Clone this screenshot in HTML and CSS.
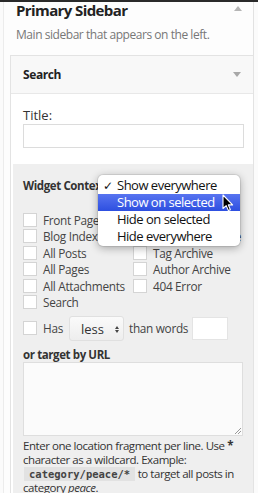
FILE: index.html
```html
<!DOCTYPE html>
<html>
<head>
<meta charset="utf-8">
<link rel="stylesheet" href="styles.css">
</head>
<body>
<div class="topbar"></div>
<div class="page">
  <div class="sidebar-head">
    <h2 class="sidebar-title">Primary Sidebar</h2>
    <span class="arrow-up"></span>
  </div>
  <p class="sidebar-desc">Main sidebar that appears on the left.</p>

  <div class="widget">
    <div class="widget-top">
      <span class="widget-name">Search</span>
      <span class="arrow-down"></span>
    </div>
    <div class="widget-body">
      <label class="field-label">Title:</label>
      <div class="text-input"></div>

      <div class="context">
        <div class="context-label">Widget Context</div>
        <div class="checks">
          <div class="check"><span class="box"></span>Front Page</div>
          <div class="check"><span class="box"></span>All Archives</div>
          <div class="check"><span class="box"></span>Blog Index</div>
          <div class="check"><span class="box"></span>Category Archive</div>
          <div class="check"><span class="box"></span>All Posts</div>
          <div class="check"><span class="box"></span>Tag Archive</div>
          <div class="check"><span class="box"></span>All Pages</div>
          <div class="check"><span class="box"></span>Author Archive</div>
          <div class="check"><span class="box"></span>All Attachments</div>
          <div class="check"><span class="box"></span>404 Error</div>
          <div class="check"><span class="box"></span>Search</div>
        </div>
        <div class="words-row">
          <span class="box"></span>
          <span class="has">Has</span>
          <span class="select">less<span class="updown"><span class="up"></span><span class="down"></span></span></span>
          <span class="than">than words</span>
          <span class="num-input"></span>
        </div>
        <div class="context-label url-label">or target by URL</div>
        <div class="textarea"><span class="grip"></span></div>
        <p class="help">Enter one location fragment per line. Use <strong>*</strong> character as a wildcard. Example: <code>category/peace/*</code> to target all posts in category <em>peace</em>.</p>

        <div class="menu">
          <div class="menu-item"><span class="tick">✓</span>Show everywhere</div>
          <div class="menu-item selected">Show on selected</div>
          <div class="menu-item">Hide on selected</div>
          <div class="menu-item">Hide everywhere</div>
        </div>
        <svg class="cursor" width="12" height="18" viewBox="0 0 12 18"><path d="M1 1 L1 14.5 L4.2 11.6 L6.4 16.6 L8.4 15.7 L6.3 10.9 L10.6 10.9 Z" fill="#000" stroke="#fff" stroke-width="1.1" stroke-linejoin="round"/></svg>
      </div>
    </div>
  </div>
</div>
</body>
</html>
```
FILE: styles.css
```css
* { box-sizing: border-box; }
html, body { margin: 0; padding: 0; }
body {
  width: 258px;
  height: 493px;
  overflow: hidden;
  background: #fbfbfb;
  font-family: "Open Sans", "Liberation Sans", sans-serif;
  color: #333;
}
.topbar { height: 2px; background: #2a2a2a; }
.page {
  margin-left: 3px;
  width: 251px;
  border-left: 1px solid #ececec;
  border-right: 1px solid #e2e2e2;
  background: #fdfdfd;
  min-height: 491px;
  position: relative;
}
.sidebar-head {
  display: flex;
  justify-content: space-between;
  align-items: flex-start;
  padding: 0 11px 0 12px;
  height: 21px;
  overflow: hidden;
}
.sidebar-title {
  margin: -3px 0 0;
  font-size: 15px;
  letter-spacing: -0.6px;
  line-height: 22px;
  font-weight: 700;
  color: #222;
}
.arrow-up {
  margin-top: 4px;
  width: 0; height: 0;
  border-left: 4px solid transparent;
  border-right: 4px solid transparent;
  border-bottom: 5px solid #b5b5b5;
}
.sidebar-desc {
  margin: 4px 0 0 12px;
  font-size: 12px;
  letter-spacing: -0.45px;
  line-height: 16px;
  color: #777;
}
.widget {
  margin: 12px 0 0 6px;
  width: 244px;
  border: 1px solid #e3e3e3;
  background: #fff;
}
.widget-top {
  height: 38px;
  display: flex;
  align-items: center;
  justify-content: space-between;
  padding: 0 12px 0 12px;
  background: #f8f8f8;
  border-bottom: 1px solid #e8e8e8;
}
.widget-name { font-size: 12px; letter-spacing: -0.4px; font-weight: 700; color: #222; }
.arrow-down {
  width: 0; height: 0;
  border-left: 4px solid transparent;
  border-right: 4px solid transparent;
  border-top: 5px solid #a8a8a8;
}
.widget-body { padding: 12px 0 0 0; }
.field-label {
  display: block;
  margin-left: 12px;
  font-size: 13px;
  line-height: 18px;
}
.text-input {
  margin: 0 9px 0 12px;
  height: 24px;
  border: 1px solid #dcdcdc;
  background: #fff;
}
.context {
  position: relative;
  margin: 16px 0 0 2px;
  padding: 14px 9px 4px 10px;
  background: #efefef;
}
.context-label {
  font-size: 11.5px;
  letter-spacing: -0.4px;
  font-weight: 700;
  line-height: 16px;
  color: #333;
}
.checks {
  margin-top: 19px;
  display: grid;
  grid-template-columns: 110px 1fr;
  row-gap: 2.4px;
}
.check {
  display: flex;
  align-items: center;
  height: 14px;
  font-size: 11.8px;
  letter-spacing: -0.3px;
  white-space: nowrap;
  color: #444;
}
.box {
  flex: none;
  display: inline-block;
  width: 14px;
  height: 14px;
  margin-right: 6px;
  border: 1px solid #d4d4d4;
  background: #fff;
}
.words-row {
  display: flex;
  align-items: center;
  margin-top: 7px;
  height: 25px;
  font-size: 11.8px;
  letter-spacing: -0.3px;
  color: #444;
}
.words-row .box { margin-right: 6px; }
.has { margin-right: 6px; }
.select {
  display: flex;
  align-items: center;
  justify-content: space-between;
  width: 55px;
  height: 25px;
  padding: 2px 4px 0 11px;
  border: 1px solid #e0e0e0;
  border-radius: 3px;
  background: linear-gradient(#fafafa, #eeeeee);
  font-size: 13px;
  letter-spacing: 0;
  color: #333;
  margin-right: 5px;
}
.updown { display: flex; flex-direction: column; gap: 1px; }
.up, .down {
  width: 0; height: 0;
  border-left: 2.5px solid transparent;
  border-right: 2.5px solid transparent;
}
.up { border-bottom: 3px solid #444; }
.down { border-top: 3px solid #444; }
.than { margin-right: 4px; }
.num-input {
  width: 36px;
  height: 23px;
  border: 1px solid #e4e4e4;
  background: #fff;
}
.url-label { margin-top: 7px; line-height: 14px; }
.textarea {
  position: relative;
  margin-top: 0;
  height: 74px;
  width: 220px;
  border: 1px solid #dedede;
  background: #fbfbfb;
}
.grip {
  position: absolute;
  right: 1px; bottom: 1px;
  width: 6px; height: 6px;
  background: linear-gradient(135deg, transparent 45%, #999 45%, #999 55%, transparent 55%, transparent 70%, #999 70%, #999 80%, transparent 80%);
}
.help {
  margin: 3px 0 0;
  font-size: 11.5px;
  letter-spacing: -0.45px;
  line-height: 14px;
  color: #333;
}
.help strong { font-weight: 700; }
.help code {
  font-family: "DejaVu Sans Mono", "Liberation Mono", monospace;
  font-size: 10.5px;
  letter-spacing: 0;
  font-weight: 700;
  color: #444;
  background: #e2e2e2;
  padding: 1px 5px;
  margin-left: 1px;
}
.menu {
  position: absolute;
  left: 85px;
  top: 11px;
  width: 142px;
  padding: 2px 0 1px;
  background: #fff;
  border-radius: 5px;
  box-shadow: 0 2px 9px rgba(0,0,0,0.32), 0 0 0 1px rgba(0,0,0,0.08);
  font-family: "Open Sans", "DejaVu Sans", sans-serif;
  font-size: 13px;
  letter-spacing: -0.5px;
  color: #111;
  z-index: 5;
}
.menu-item {
  position: relative;
  height: 17px;
  line-height: 17px;
  padding-left: 19px;
  white-space: nowrap;
}
.tick {
  position: absolute;
  left: 5px;
  font-size: 12px;
}
.menu-item.selected {
  background: linear-gradient(#5874f0, #2d4fe0);
  color: #fff;
}
.cursor {
  position: absolute;
  left: 209px;
  top: 30px;
  z-index: 6;
}
```
